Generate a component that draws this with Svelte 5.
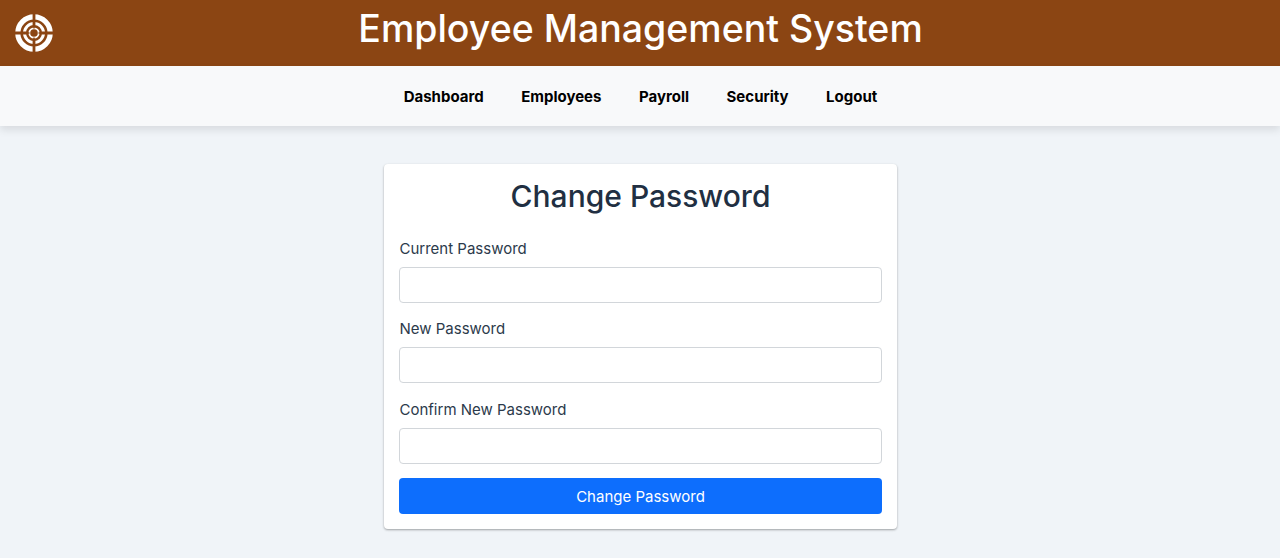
<script>
  const links = ['Dashboard', 'Employees', 'Payroll', 'Security', 'Logout'];
  const fields = ['Current Password', 'New Password', 'Confirm New Password'];
</script>

<header>
  <svg class="logo" viewBox="0 0 38 38" aria-hidden="true">
    <g fill="none" stroke="#fff">
      <circle cx="19" cy="19" r="16.2" stroke-width="5.2" />
      <circle cx="19" cy="19" r="9.5" stroke-width="3" />
      <circle cx="19" cy="19" r="4.7" stroke-width="1.8" />
    </g>
    <path d="M19 0V13M19 25V38M0 19H13M25 19H38" stroke="#8b4513" stroke-width="2.8" />
    <path d="M19 12V14.5M19 23.5V26M12 19H14.5M23.5 19H26" stroke="#8b4513" stroke-width="1.4" />
  </svg>
  <h1>Employee Management System</h1>
</header>
<nav>
  {#each links as link}<a href="#top">{link}</a>{/each}
</nav>
<main>
  <form>
    <h2>Change Password</h2>
    {#each fields as field}
      <label><span>{field}</span><input type="password" /></label>
    {/each}
    <button type="button">Change Password</button>
  </form>
</main>

<style>
  :global(body) { margin: 0; background: #f0f4f8; font-family: Inter, sans-serif; }
  header { height: 66.4px; background: #8b4513; display: grid; grid-template-columns: 68px 1fr 67px; box-sizing: border-box; }
  .logo { width: 38px; height: 38px; margin: 14px 0 0 15px; }
  h1 { margin: 6.4px 0 0; color: #fff; font-size: 37.5px; line-height: 45px; font-weight: 500; text-align: center; }
  nav { height: 60px; box-sizing: border-box; padding: 1px 0 0 1px; display: flex; justify-content: center; align-items: center; gap: 37.5px; background: #f8f9fa; box-shadow: 0 4px 8px rgba(0,0,0,.1); }
  a { color: #000; text-decoration: none; font-size: 15px; font-weight: 700; }
  main { box-sizing: border-box; height: 431.6px; display: flex; justify-content: center; align-items: flex-start; padding: 37.6px 0 0 1px; }
  form { box-sizing: border-box; width: 513px; height: 365px; padding: 14.3px 15px 15px; background: #fff; border-radius: 4px; box-shadow: 0 1px 3px rgba(0,0,0,.12), 0 1px 2px rgba(0,0,0,.24); }
  h2 { margin: 0 0 23.9px; color: #212f42; font-size: 30px; line-height: 36px; font-weight: 500; text-align: center; }
  label { display: block; margin-bottom: 15.3px; color: #2c3a4b; font-size: 15px; line-height: 22.5px; }
  span { display: block; margin-bottom: 6.5px; padding-left: .5px; }
  input { box-sizing: border-box; display: block; width: 100%; height: 36px; border: 1px solid #d2d6da; border-radius: 4px; background: #fff; }
  label:last-of-type { margin-bottom: 14.6px; }
  button { display: block; width: 100%; height: 35.8px; padding: 1px 0 0; border: 0; border-radius: 4px; background: #0d6efd; color: #fff; font: 400 15px Inter, sans-serif; }
</style>
